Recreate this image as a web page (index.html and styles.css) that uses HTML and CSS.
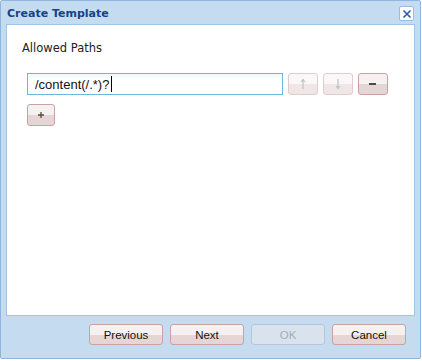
FILE: index.html
```
<!DOCTYPE html>
<html>
<head>
<title>Create Template</title>
<link rel="stylesheet" href="styles.css">
</head>
<body>
<div class="window">
  <div class="header">
    <span class="title">Create Template</span>
    <span class="close">
      <svg width="12" height="12" viewBox="0 0 12 12"><path d="M2.5 2.5 L9.5 9.5 M9.5 2.5 L2.5 9.5" stroke="#2b5ca6" stroke-width="1.6" fill="none"/></svg>
    </span>
  </div>
  <div class="panel">
    <div class="label">Allowed Paths</div>
    <div class="row">
      <div class="field">/content(/.*)?<span class="caret"></span></div>
      <span class="tool disabled">
        <svg width="8" height="12" viewBox="0 0 8 12"><path d="M4 1 L4 11 M2 4 L4 1.5 L6 4" stroke="#b9c4c9" stroke-width="1.2" fill="none"/></svg>
      </span>
      <span class="tool disabled">
        <svg width="8" height="12" viewBox="0 0 8 12"><path d="M4 1 L4 11 M2 8 L4 10.5 L6 8" stroke="#b9c4c9" stroke-width="1.2" fill="none"/></svg>
      </span>
      <span class="tool">
        <svg width="10" height="4" viewBox="0 0 10 4"><rect x="1" y="1" width="7" height="2" fill="#4a4a4a"/></svg>
      </span>
    </div>
    <div class="row">
      <span class="tool add">
        <svg width="8" height="8" viewBox="0 0 8 8"><path d="M4 1 L4 7 M1 4 L7 4" stroke="#5a4a3a" stroke-width="1.3" fill="none"/></svg>
      </span>
    </div>
  </div>
  <div class="footer">
    <span class="btn">Previous</span>
    <span class="btn">Next</span>
    <span class="btn off">OK</span>
    <span class="btn">Cancel</span>
  </div>
</div>
</body>
</html>
```
FILE: styles.css
```
/* Create Template dialog */

body
{ margin: 0;
background-color: white;
}

div.window
{ width: 419px;
height: 357px;
border: 1px solid #8fb5dc;
border-radius: 2px;
background-color: #c5dcf0;
display: flex;
flex-direction: column;
}

div.header
{ height: 23px;
display: flex;
align-items: center;
justify-content: space-between;
padding: 0 6px 0 6px;
}

span.title
{ font-family: "DejaVu Sans", sans-serif;
font-size: 11px;
font-weight: bold;
color: #15428b;
padding-top: 2px;
}

span.close
{ width: 13px;
height: 13px;
border: 1px solid #99bbe8;
border-radius: 2px;
background-color: white;
display: flex;
align-items: center;
justify-content: center;
margin-top: 2px;
}

div.panel
{ flex: 1;
margin: 0 5px 0 5px;
background-color: white;
border: 1px solid #9fc4e8;
padding: 16px 0 0 15px;
}

div.label
{ font-family: "DejaVu Sans", sans-serif;
font-size: 11.5px;
line-height: 14px;
color: #222;
margin-bottom: 18px;
}

div.row
{ display: flex;
gap: 5px;
margin-left: 5px;
margin-bottom: 9px;
}

div.field
{ width: 247px;
height: 20px;
border: 1px solid #6cb7e2;
background: linear-gradient(#f0f9fc, white 6px);
font-family: "Liberation Sans", Arial, sans-serif;
font-size: 13px;
color: #111;
padding-left: 7px;
display: flex;
align-items: center;
}

span.caret
{ width: 1px;
height: 16px;
background-color: black;
margin-left: 2px;
}

span.tool
{ width: 28px;
height: 20px;
border: 1px solid #c8a2a2;
border-radius: 3px;
background: linear-gradient(#f6f0f0 50%, #e6d5d5 50%);
display: flex;
align-items: center;
justify-content: center;
}

span.tool.disabled
{ border-color: #e0cccc;
background: linear-gradient(#fbf7f7 50%, #f0e6e6 50%);
}

span.tool.add
{ width: 26px;
height: 20px;
}

div.footer
{ height: 42px;
display: flex;
justify-content: flex-end;
gap: 7px;
padding: 8px 14px 0 0;
box-sizing: border-box;
}

span.btn
{ width: 72px;
height: 19px;
border: 1px solid #c8a2a2;
border-radius: 3px;
background: linear-gradient(#f6f0f0 55%, #e6d5d5 55%);
font-family: "Liberation Sans", Arial, sans-serif;
font-size: 11.5px;
color: #111;
display: flex;
align-items: center;
justify-content: center;
}

span.btn.off
{ border-color: #b7c5d6;
background: #d9e3ee;
color: #a3adb8;
}
```
